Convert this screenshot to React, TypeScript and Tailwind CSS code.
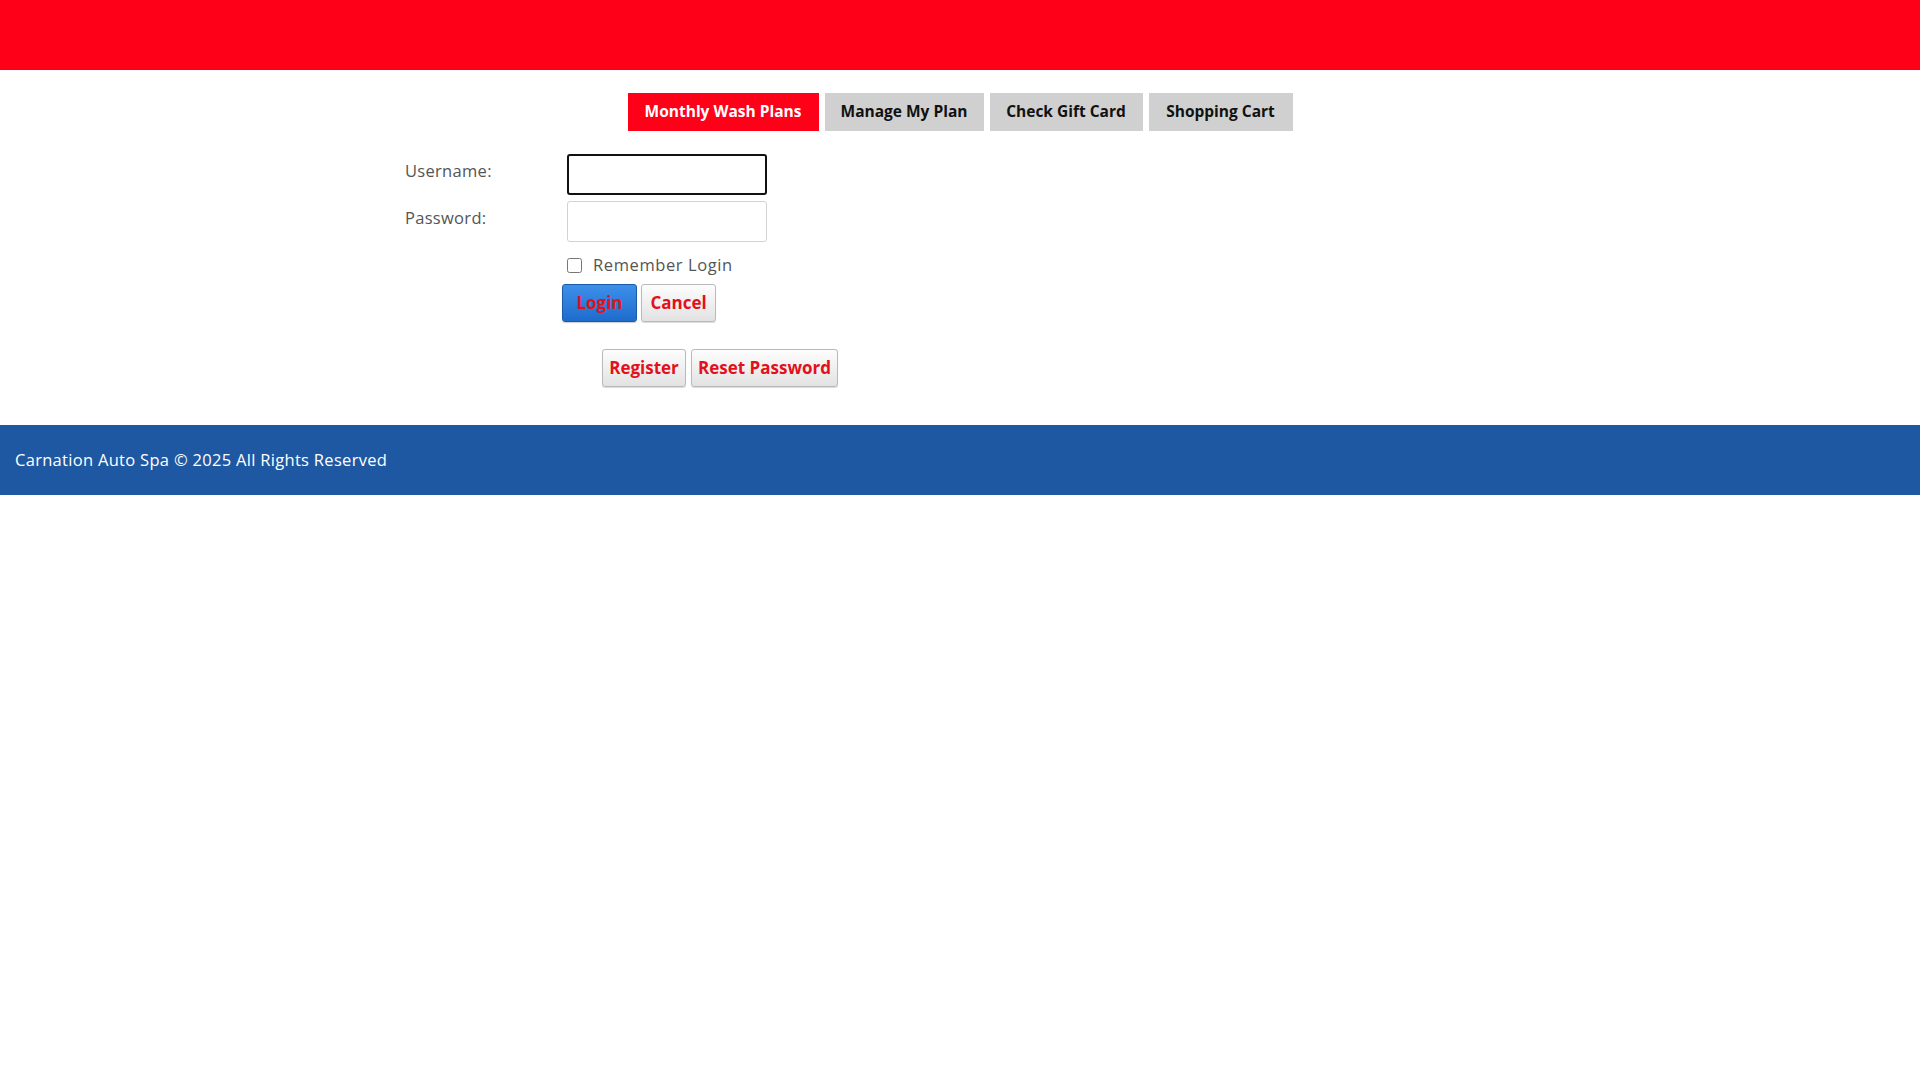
import React, { useState } from 'react';

const font = { fontFamily: '"Open Sans", "Liberation Sans", sans-serif' };

const tabs = [
  { label: 'Monthly Wash Plans', active: true, w: 'w-[191px]' },
  { label: 'Manage My Plan', active: false, w: 'w-[159px]' },
  { label: 'Check Gift Card', active: false, w: 'w-[153px]' },
  { label: 'Shopping Cart', active: false, w: 'w-[144px]' },
];

const btnGrey =
  'h-[38px] rounded-[3px] border border-[#b9b9b9] bg-gradient-to-b from-[#fdfdfd] to-[#e2e2e2] text-[#e3101c] font-bold text-[17px] shadow-[0_1px_1px_rgba(0,0,0,0.15)]';

export default function App() {
  const [username, setUsername] = useState('');
  const [password, setPassword] = useState('');
  const [remember, setRemember] = useState(false);

  return (
    <div className="min-h-screen bg-white" style={font}>
      <div className="h-[70px] bg-[#ff0019]" />

      <nav className="flex justify-center gap-[6px] pt-[23px]">
        {tabs.map(t => (
          <a key={t.label} href="#"
            className={`${t.w} h-[38px] shrink-0 flex items-center justify-center whitespace-nowrap text-[15.5px] font-bold
              ${t.active ? 'bg-[#ff0019] text-white' : 'bg-[#d0d0d0] text-[#111]'}`}>
            {t.label}
          </a>
        ))}
      </nav>

      <div className="mx-auto w-[1140px] px-[15px]">
        <form className="pt-[23px]" onSubmit={e => e.preventDefault()}>
          <div className="flex items-start">
            <label className="w-[162px] pt-[5px] text-[16.5px] text-[#555] tracking-[0.3px]">Username:</label>
            <input autoFocus value={username} onChange={e => setUsername(e.target.value)}
              className="w-[200px] h-[41px] rounded-[3px] border-2 border-[#111] px-2 text-[16px] outline-none" />
          </div>
          <div className="flex items-start mt-[6px]">
            <label className="w-[162px] pt-[5px] text-[16.5px] text-[#555] tracking-[0.3px]">Password:</label>
            <input type="password" value={password} onChange={e => setPassword(e.target.value)}
              className="w-[200px] h-[41px] rounded-[3px] border border-[#d2d2d2] px-2 text-[16px] outline-none" />
          </div>
          <div className="flex items-center ml-[162px] mt-[15px] h-[16px]">
            <input type="checkbox" checked={remember} onChange={e => setRemember(e.target.checked)}
              className="w-[15px] h-[15px] m-0 accent-[#1f6fd0]" />
            <span className="ml-[11px] text-[16.5px] text-[#555] tracking-[0.6px]">Remember Login</span>
          </div>
          <div className="flex gap-[4px] ml-[157px] mt-[11px]">
            <button type="submit"
              className="w-[75px] h-[38px] rounded-[3px] border border-[#1a5aa8] bg-gradient-to-b from-[#3d90ea] to-[#1d6ccd] text-[#e3101c] font-bold text-[17px] shadow-[0_1px_1px_rgba(0,0,0,0.2)]">
              Login
            </button>
            <button type="button" className={`w-[75px] ${btnGrey}`}>Cancel</button>
          </div>
          <div className="flex gap-[5px] ml-[197px] mt-[27px]">
            <button type="button" className={`w-[84px] ${btnGrey}`}>Register</button>
            <button type="button" className={`w-[147px] ${btnGrey}`}>Reset Password</button>
          </div>
        </form>
      </div>

      <footer className="mt-[38px] h-[70px] bg-[#1e58a2] flex items-center px-[15px]">
        <p className="text-white text-[16.5px] tracking-[0.3px]">Carnation Auto Spa © 2025 All Rights Reserved</p>
      </footer>
    </div>
  );
}
